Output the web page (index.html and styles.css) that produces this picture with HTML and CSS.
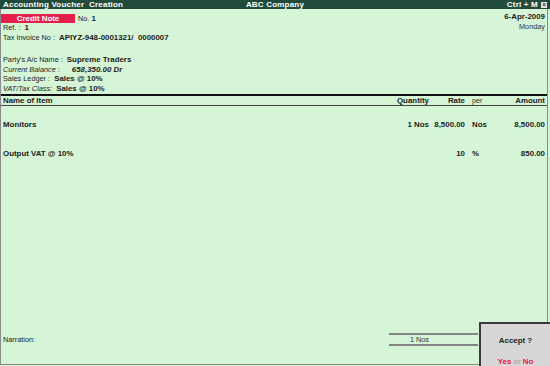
FILE: index.html
```html
<!DOCTYPE html>
<html>
<head>
<meta charset="utf-8">
<link rel="stylesheet" href="styles.css">
</head>
<body>
<div class="titlebar">
  <span class="t-left">Accounting Voucher&nbsp; Creation</span>
  <span class="t-mid">ABC Company</span>
  <span class="t-right">Ctrl + M <span class="xbox">&#215;</span></span>
</div>
<div class="panel">
  <div class="head">
    <div class="head-left">
      <div class="line badge-line"><span class="badge">Credit Note</span><span class="no">No. <b>1</b></span></div>
      <div class="line">Ref. : &nbsp;<b>1</b></div>
      <div class="line">Tax Invoice No : &nbsp;<b>APIYZ-948-0001321/&nbsp; 0000007</b></div>
      <div class="line party">Party's A/c Name : &nbsp;<b>Supreme Traders</b></div>
      <div class="line"><i>Current Balance :</i> <b class="bal"><i>658,350.00 Dr</i></b></div>
      <div class="line">Sales Ledger : &nbsp;<b>Sales @ 10%</b></div>
      <div class="line"><i>VAT/Tax Class:</i> &nbsp;<b>Sales @ 10%</b></div>
    </div>
    <div class="head-right">
      <div class="date">6-Apr-2009</div>
      <div class="day">Monday</div>
    </div>
  </div>
  <div class="row hdr">
    <span class="c-name">Name of Item</span>
    <span class="c-qty">Quantity</span>
    <span class="c-rate">Rate</span>
    <span class="c-per light">per</span>
    <span class="c-amt">Amount</span>
  </div>
  <div class="row item r1">
    <span class="c-name">Monitors</span>
    <span class="c-qty">1 Nos</span>
    <span class="c-rate">8,500.00</span>
    <span class="c-per">Nos</span>
    <span class="c-amt">8,500.00</span>
  </div>
  <div class="row item r2">
    <span class="c-name">Output VAT @ 10%</span>
    <span class="c-qty"></span>
    <span class="c-rate">10</span>
    <span class="c-per">%</span>
    <span class="c-amt">850.00</span>
  </div>
  <div class="spacer"></div>
  <div class="footer">
    <span class="narr">Narration:</span>
    <span class="total">1 Nos</span>
    <span class="rest"></span>
  </div>
  <div class="accept">
    <div class="q">Accept ?</div>
    <div class="yn"><span class="red">Yes</span> <span class="or">or</span> <span class="red">No</span></div>
  </div>
</div>
</body>
</html>
```
FILE: styles.css
```css
html, body {
  margin: 0;
  padding: 0;
  background: #d6f5d6;
  width: 550px;
  height: 366px;
  overflow: hidden;
  font-family: "Liberation Sans", Arial, sans-serif;
  font-size: 7.3px;
  color: #1c1c1c;
}
b { font-weight: bold; font-size: 7.9px; }

.titlebar {
  height: 9px;
  background: #214b3b;
  color: #fff;
  font-weight: bold;
  font-size: 8px;
  line-height: 9px;
  display: grid;
  grid-template-columns: 1fr auto 1fr;
  padding: 0 3px 0 3px;
  letter-spacing: 0.2px;
}
.t-mid { text-align: center; }
.t-right { text-align: right; display: flex; justify-content: flex-end; align-items: center; gap: 3px; }
.xbox {
  display: inline-block;
  width: 6px;
  height: 6px;
  background: #e8e8e8;
  color: #214b3b;
  font-size: 7px;
  line-height: 6px;
  text-align: center;
  letter-spacing: 0;
}

.panel {
  position: relative;
  width: 546px;
  height: 355px;
  border-left: 1px solid #8a8a8a;
  border-right: 1px solid #8a8a8a;
  border-bottom: 1px solid #8a8a8a;
  display: flex;
  flex-direction: column;
}

.head {
  display: flex;
  justify-content: space-between;
  padding: 5px 2px 0 2px;
  height: 80px;
}
.line { height: 9.5px; line-height: 9.5px; white-space: nowrap; }
.badge-line { display: flex; align-items: center; height: 9px; line-height: 9px; }
.badge {
  display: inline-block;
  width: 74px;
  height: 9px;
  margin-left: -2px;
  background: #e3204c;
  color: #fff;
  font-weight: bold;
  font-size: 7.9px;
  text-align: center;
  line-height: 9px;
}
.no { margin-left: 3px; }
.party { margin-top: 13px; }
.bal { margin-left: 10px; }

.head-right { text-align: right; margin-top: -2px; }
.date { font-weight: bold; font-size: 7.9px; height: 9px; line-height: 9px; }
.day { height: 10px; line-height: 12px; color: #333; }

.row {
  display: grid;
  grid-template-columns: 1fr 40px 36px 30px 50px;
  padding: 0 2px;
  height: 9px;
  line-height: 9px;
  font-weight: bold;
  font-size: 7.9px;
}
.hdr {
  border-top: 2px solid #111;
  border-bottom: 1px solid #444;
  height: 9px;
}
.c-qty, .c-rate, .c-amt { text-align: right; }
.c-per { padding-left: 7px; }
.light { font-weight: normal; font-size: 7.3px; color: #333; }
.r1 { margin-top: 14px; }
.r2 { margin-top: 20px; }

.spacer { flex: 1; }

.footer {
  display: flex;
  align-items: center;
  height: 13px;
  margin-bottom: 18px;
}
.narr { flex: 1; padding-left: 2px; }
.total {
  width: 89px;
  box-sizing: border-box;
  border-top: 2px solid #858585;
  border-bottom: 2px solid #858585;
  height: 13px;
  line-height: 9px;
  text-align: right;
  padding-right: 49px;
  color: #333;
}
.rest { width: 69px; }

.accept {
  position: absolute;
  right: -3px;
  bottom: -2px;
  width: 71px;
  height: 44px;
  box-sizing: border-box;
  background: #d6d6d6;
  border: 2px solid #3a3a3a;
  border-right: none;
  border-bottom: none;
  text-align: center;
}
.q { font-weight: bold; font-size: 7.9px; margin-top: 12px; line-height: 9px; }
.yn { font-weight: bold; font-size: 7.9px; margin-top: 12px; line-height: 9px; }
.red { color: #e3204c; }
.or { color: #9a9a9a; font-weight: normal; }
```
